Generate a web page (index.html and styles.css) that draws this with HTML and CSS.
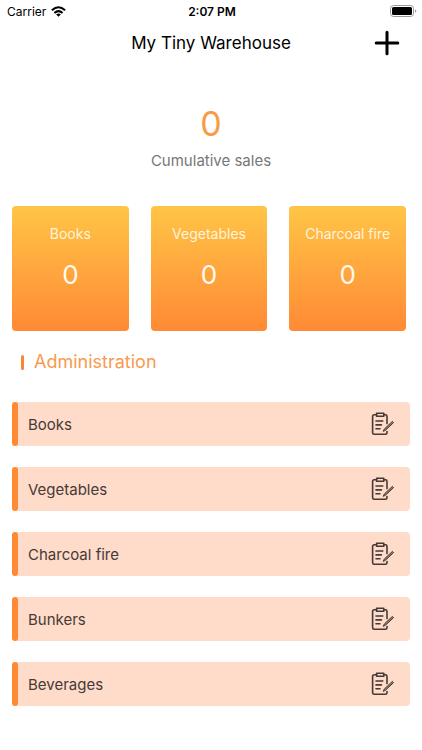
FILE: index.html
```html
<!DOCTYPE html>
<html lang="en">
<head>
<meta charset="utf-8">
<meta name="viewport" content="width=device-width, initial-scale=1">
<title>My Tiny Warehouse</title>
<link rel="stylesheet" href="styles.css">
</head>
<body>
<svg class="symbols" aria-hidden="true">
  <symbol id="edit-note" viewBox="0 0 24 24">
    <g fill="none" stroke="currentColor" stroke-width="1.6" stroke-linecap="round" stroke-linejoin="round">
      <path d="M5.5 2.8H3.2Q1.6 2.8 1.6 4.4V20.6Q1.6 22.3 3.2 22.3H14.4Q16 22.3 16 20.6V19.6M12.8 2.8H14.4Q16 2.8 16 4.4V11.6"/>
      <path d="M5.6 1.2H12.8V4.2H5.6Z"/>
      <path d="M5 9H11.8M5 12.9H10.4M5 16.8H9"/>
      <path d="M12.4 19L13.4 16.9L21.4 9.4L22.6 10.6L14.6 18.1Z" stroke-width="1" fill="currentColor" fill-opacity=".6"/>
    </g>
  </symbol>
</svg>
<div class="status">
  <span class="status-carrier">Carrier
    <svg class="wifi" viewBox="0 0 15 11" aria-hidden="true"><g fill="none" stroke="#000" stroke-width="2"><path d="M.9 4.3Q7.5-1.7 14.1 4.3"/><path d="M3.4 6.9Q7.5 3.3 11.6 6.9"/></g><path d="M5.2 8.5Q7.5 6.7 9.8 8.5L7.5 10.8Z"/></svg>
  </span>
  <span class="status-time">2:07 PM</span>
  <svg class="battery" viewBox="0 0 27 12" aria-hidden="true"><rect x=".5" y=".5" width="23" height="11" rx="3" fill="#fff" stroke="#999"/><rect x="2" y="2" width="20" height="8" rx="1.5"/><path d="M25 4.2Q26.3 4.8 26.3 6T25 7.8Z" fill="#999"/></svg>
</div>
<header class="bar">
  <h1>My Tiny Warehouse</h1>
  <button class="add" type="button" aria-label="Add">
    <svg viewBox="0 0 26 26" aria-hidden="true"><path d="M13 2.2V23.8M2.2 13H23.8" stroke="#000" stroke-width="3" stroke-linecap="round"/></svg>
  </button>
</header>
<main>
  <section class="total">
    <strong>0</strong>
    <span>Cumulative sales</span>
  </section>
  <section class="cards">
    <div class="card"><span>Books</span><b>0</b></div>
    <div class="card"><span>Vegetables</span><b>0</b></div>
    <div class="card"><span>Charcoal fire</span><b>0</b></div>
  </section>
  <h2>Administration</h2>
  <ul class="rows">
    <li><span>Books</span><button type="button" aria-label="Edit Books"><svg><use href="#edit-note"/></svg></button></li>
    <li><span>Vegetables</span><button type="button" aria-label="Edit Vegetables"><svg><use href="#edit-note"/></svg></button></li>
    <li><span>Charcoal fire</span><button type="button" aria-label="Edit Charcoal fire"><svg><use href="#edit-note"/></svg></button></li>
    <li><span>Bunkers</span><button type="button" aria-label="Edit Bunkers"><svg><use href="#edit-note"/></svg></button></li>
    <li><span>Beverages</span><button type="button" aria-label="Edit Beverages"><svg><use href="#edit-note"/></svg></button></li>
  </ul>
</main>
</body>
</html>
```
FILE: styles.css
```css
* { box-sizing: border-box; }
body { margin: 0; background: #fff; color: #000; font-family: Inter, "Liberation Sans", sans-serif; }
h1, h2, ul { margin: 0; padding: 0; font-weight: 400; }
button { display: flex; padding: 0; border: 0; background: none; color: inherit; cursor: pointer; }
.symbols { display: none; }

.status { display: grid; grid-template-columns: 1fr auto 1fr; align-items: center; height: 22px; padding: 0 5px 0 7px; font-size: 12px; }
.status-carrier { display: flex; align-items: center; gap: 5px; }
.status-time { font-weight: 600; }
.wifi { width: 15px; height: 11px; }
.battery { width: 27px; height: 12px; justify-self: end; }

.bar { display: grid; grid-template-columns: 1fr auto 1fr; align-items: center; height: 42px; padding: 0 22px; }
.bar h1 { grid-column: 2; font-size: 17px; line-height: 24px; }
.add { justify-self: end; }
.add svg { width: 26px; height: 26px; }

.total { display: flex; flex-direction: column; align-items: center; padding-top: 39px; }
.total strong { font-size: 34px; line-height: 42px; font-weight: 400; color: #fb9a45; }
.total span { margin-top: 6px; font-size: 15px; line-height: 20px; color: #777; }

.cards { display: grid; grid-template-columns: repeat(3, 1fr); gap: 22px; padding: 35px 16px 0 12px; }
.card { display: flex; flex-direction: column; align-items: center; height: 125px; padding-top: 18px; border-radius: 4px; background: linear-gradient(#ffc547, #ff8a35); color: #fff4dc; }
.card span { font-size: 14px; line-height: 20px; }
.card b { margin-top: 15px; font-size: 26px; line-height: 32px; font-weight: 400; color: #fffaf0; }

h2 { display: flex; align-items: center; gap: 10px; margin: 19px 21px 0; font-size: 18px; line-height: 24px; color: #f79a50; }
h2::before { content: ""; width: 3px; height: 15px; border-radius: 2px; background: #f98638; }

.rows { display: grid; gap: 21px; margin: 28px 12px 0; list-style: none; }
.rows li { display: flex; align-items: center; height: 44px; padding-right: 15px; border-radius: 4px; background: #ffdbca; color: #453a36; font-size: 15px; }
.rows li::before { content: ""; width: 6px; height: 44px; margin-right: 10px; border-radius: 4px; background: #ff8a35; }
.rows span { flex: 1; }
.rows svg { width: 24px; height: 24px; }
```
